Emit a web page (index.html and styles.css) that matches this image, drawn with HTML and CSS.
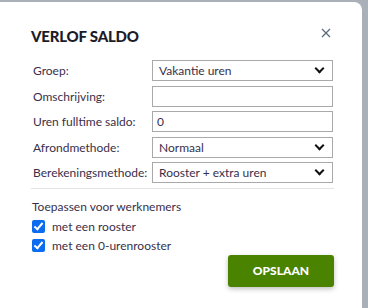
FILE: index.html
```html
<!DOCTYPE html>
<html lang="nl">
  <head>
    <meta charset="UTF-8" />
    <title>Verlof saldo</title>
    <link rel="stylesheet" href="styles.css">
  </head>
  <body>
    <div class="modal">
      <div class="modal-head">
        <h2>VERLOF SALDO</h2>
        <button class="close" type="button" aria-label="Sluiten">
          <svg width="10" height="10" viewBox="0 0 10 10">
            <path d="M1 1L9 9M9 1L1 9" stroke="#5b6b7c" stroke-width="1.3" fill="none" />
          </svg>
        </button>
      </div>

      <form class="form">
        <div class="row">
          <label>Groep:</label>
          <div class="select"><span>Vakantie uren</span><i class="chev"></i></div>
        </div>
        <div class="row">
          <label>Omschrijving:</label>
          <input class="field" name="omschrijving" />
        </div>
        <div class="row">
          <label>Uren fulltime saldo:</label>
          <input class="field" name="saldo" value="0" />
        </div>
        <div class="row">
          <label>Afrondmethode:</label>
          <div class="select"><span>Normaal</span><i class="chev"></i></div>
        </div>
        <div class="row">
          <label>Berekeningsmethode:</label>
          <div class="select"><span>Rooster + extra uren</span><i class="chev"></i></div>
        </div>

        <hr />

        <p class="sub">Toepassen voor werknemers</p>
        <label class="check"><span class="box"></span>met een rooster</label>
        <label class="check"><span class="box"></span>met een 0-urenrooster</label>

        <div class="actions">
          <button type="submit" class="save">OPSLAAN</button>
        </div>
      </form>
    </div>
  </body>
</html>
```

FILE: styles.css
```css
body {
  margin: 0;
  background: #a9b0b8;
  font-family: Lato, sans-serif;
  font-size: 12px;
  color: #3a2f4a;
  overflow: hidden;
}
.modal {
  margin-top: 2px;
  width: 362px;
  height: 320px;
  background: #fff;
  border-top-right-radius: 8px;
  padding: 0 28px 0 31px;
  box-sizing: border-box;
}
.modal-head {
  display: flex;
  justify-content: space-between;
  align-items: center;
  padding-top: 25px;
  height: 18px;
}
h2 {
  margin: 0;
  font-size: 15px;
  line-height: 18px;
  font-weight: 900;
  color: #1c1c28;
  letter-spacing: -0.2px;
}
.close {
  border: none;
  background: none;
  padding: 0;
  margin-right: 3px;
  margin-top: -6px;
  width: 10px;
  height: 10px;
  display: flex;
}
.form {
  margin-top: 15px;
}
.row {
  display: grid;
  grid-template-columns: 119px 181px;
  align-items: center;
  margin-left: 2px;
  margin-bottom: 4.6px;
}
.row label {
  color: #3a2f4a;
}
.select,
.field {
  box-sizing: border-box;
  height: 21px;
  border: 1px solid #a9a9a9;
  background: #fff;
  font: inherit;
  color: #3a2f4a;
}
.select {
  display: flex;
  align-items: center;
  justify-content: space-between;
  padding: 0 7px 0 6px;
}
.field {
  padding: 0 4px;
  outline: none;
}
.chev {
  width: 5px;
  height: 5px;
  border-right: 2.5px solid #111;
  border-bottom: 2.5px solid #111;
  transform: rotate(45deg);
  margin-top: -4px;
  margin-right: 2px;
}
hr {
  border: none;
  border-top: 1px solid #e4e4e4;
  margin: 3px 0 0;
  width: 303px;
}
.sub {
  margin: 10px 0 3px 1px;
  line-height: 15px;
}
.check {
  display: flex;
  align-items: center;
  gap: 7px;
  margin-left: 1px;
  height: 19px;
}
.box {
  width: 13px;
  height: 13px;
  border-radius: 2px;
  background: #0b6cf0;
  position: relative;
}
.box::after {
  content: "";
  position: absolute;
  left: 4px;
  top: 1px;
  width: 3px;
  height: 7px;
  border-right: 2px solid #fff;
  border-bottom: 2px solid #fff;
  transform: rotate(40deg);
}
.actions {
  display: flex;
  justify-content: flex-end;
}
.save {
  margin-top: 0;
  width: 106px;
  height: 32px;
  background: #4a8300;
  color: #fff;
  border: none;
  border-radius: 3px;
  font: inherit;
  font-weight: 900;
  font-size: 12px;
  box-shadow: 0 2px 5px rgba(0, 0, 0, 0.25);
}
```
